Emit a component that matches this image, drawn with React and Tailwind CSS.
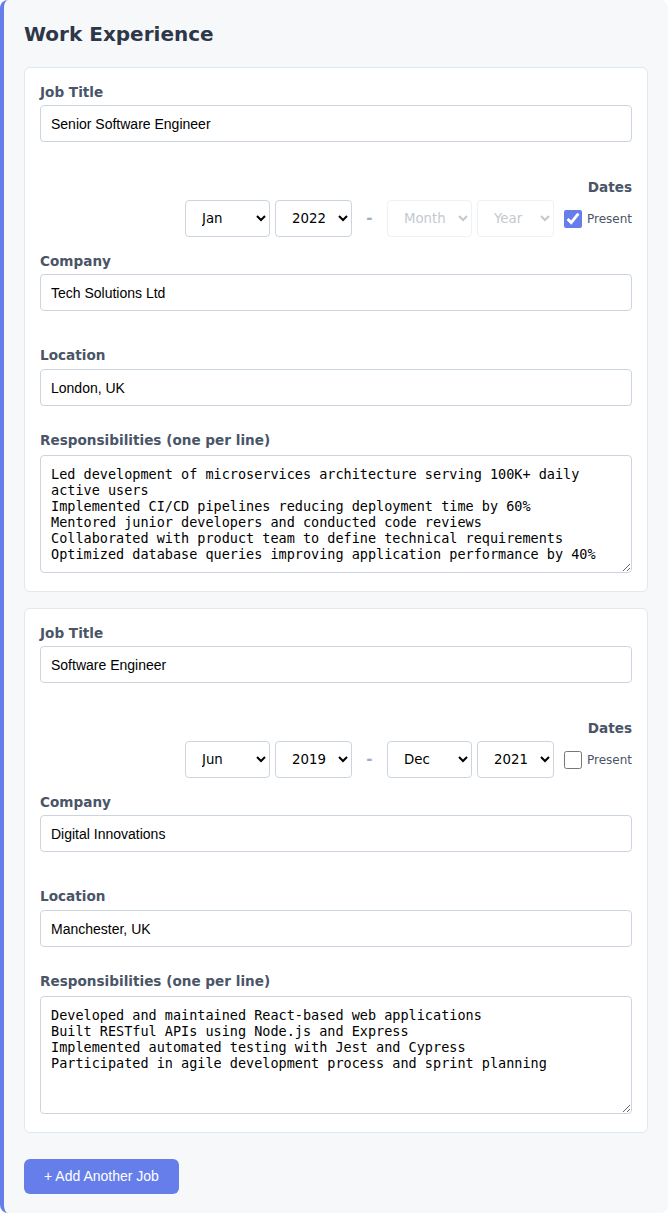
import { useState } from "react";

const MONTHS = ["Jan", "Feb", "Mar", "Apr", "May", "Jun", "Jul", "Aug", "Sep", "Oct", "Nov", "Dec"];
const YEARS = ["2024", "2023", "2022", "2021", "2020", "2019", "2018", "2017"];

const jobsData = [
  {
    id: 1,
    title: "Senior Software Engineer",
    startMonth: "Jan",
    startYear: "2022",
    endMonth: "",
    endYear: "",
    present: true,
    company: "Tech Solutions Ltd",
    location: "London, UK",
    responsibilities:
      "Led development of microservices architecture serving 100K+ daily active users\nImplemented CI/CD pipelines reducing deployment time by 60%\nMentored junior developers and conducted code reviews\nCollaborated with product team to define technical requirements\nOptimized database queries improving application performance by 40%",
  },
  {
    id: 2,
    title: "Software Engineer",
    startMonth: "Jun",
    startYear: "2019",
    endMonth: "Dec",
    endYear: "2021",
    present: false,
    company: "Digital Innovations",
    location: "Manchester, UK",
    responsibilities:
      "Developed and maintained React-based web applications\nBuilt RESTful APIs using Node.js and Express\nImplemented automated testing with Jest and Cypress\nParticipated in agile development process and sprint planning",
  },
];

const labelCls = "block h-5 leading-5 text-[13.6px] font-bold text-[#4a5568]";
const inputCls =
  "block w-full h-[37px] px-[10px] border border-[#cbd5e0] rounded-[4px] bg-white text-[14px] text-black [font-family:'Liberation_Sans',Arial,sans-serif]";

const DateSelect = ({ value, options, placeholder, width, disabled, onChange }) => (
  <select
    value={value}
    disabled={disabled}
    onChange={onChange}
    className={`${width} h-[37px] pl-[12px] pr-[6px] border rounded-[4px] bg-white text-[13.33px] ${
      disabled ? "border-[#edf2f7] text-[#c4c9d0]" : "border-[#cbd5e0] text-black"
    }`}
  >
    <option value="">{placeholder}</option>
    {options.map((o) => (
      <option key={o} value={o}>
        {o}
      </option>
    ))}
  </select>
);

const JobCard = ({ job, onChange }) => {
  const set = (key) => (e) => onChange(job.id, key, e.target.value);

  return (
    <div className="bg-white border border-[#e2e8f0] rounded-[6px] px-[15px] pt-[14px] pb-[18px] mb-[16px]">
      <label className={`${labelCls} mb-[3px]`}>Job Title</label>
      <input value={job.title} onChange={set("title")} className={`${inputCls} mb-[35px]`} />

      <div className="mb-[14px]">
        <label className={`${labelCls} text-right mb-[3px]`}>Dates</label>
        <div className="flex items-center justify-end gap-[5px]">
          <DateSelect value={job.startMonth} options={MONTHS} placeholder="Month" width="w-[85px]" onChange={set("startMonth")} />
          <DateSelect value={job.startYear} options={YEARS} placeholder="Year" width="w-[77px]" onChange={set("startYear")} />
          <span className="w-[25px] text-center text-[#a0aec0] text-[15px] font-bold">-</span>
          <DateSelect
            value={job.endMonth}
            options={MONTHS}
            placeholder="Month"
            width="w-[85px]"
            disabled={job.present}
            onChange={set("endMonth")}
          />
          <DateSelect
            value={job.endYear}
            options={YEARS}
            placeholder="Year"
            width="w-[77px]"
            disabled={job.present}
            onChange={set("endYear")}
          />
          <label className="flex items-center gap-[5px] ml-[5px] text-[12px] text-[#4a5568]">
            <input
              type="checkbox"
              checked={job.present}
              onChange={(e) => onChange(job.id, "present", e.target.checked)}
              className="w-[18px] h-[18px] m-0 accent-[#667eea]"
            />
            Present
          </label>
        </div>
      </div>

      <label className={`${labelCls} mb-[3px]`}>Company</label>
      <input value={job.company} onChange={set("company")} className={`${inputCls} mb-[34px]`} />

      <label className={`${labelCls} mb-[4px]`}>Location</label>
      <input value={job.location} onChange={set("location")} className={`${inputCls} mb-[24px]`} />

      <label className={`${labelCls} mb-[5px]`}>Responsibilities (one per line)</label>
      <textarea
        value={job.responsibilities}
        onChange={set("responsibilities")}
        className="block w-full h-[118px] px-[10px] pt-[10px] pb-[8px] border border-[#cbd5e0] rounded-[4px] bg-white text-[13.5px] leading-[16px] text-black [font-family:'DejaVu_Sans_Mono',monospace]"
      />
    </div>
  );
};

export default function App() {
  const [jobs, setJobs] = useState(jobsData);

  const updateJob = (id, key, value) => {
    setJobs(jobs.map((j) => (j.id === id ? { ...j, [key]: value } : j)));
  };

  const addJob = () => {
    setJobs([
      ...jobs,
      {
        id: Date.now(),
        title: "",
        startMonth: "",
        startYear: "",
        endMonth: "",
        endYear: "",
        present: false,
        company: "",
        location: "",
        responsibilities: "",
      },
    ]);
  };

  return (
    <div className="bg-white min-h-[1215px] [font-family:'DejaVu_Sans',Verdana,sans-serif]">
      <div className="bg-[#f7f8fa] border-l-4 border-[#667eea] rounded-lg pl-[20px] pr-[20px] pt-[20px] pb-[19px]">
        <h2 className="text-[20px] leading-[28px] font-bold text-[#2d3748] mb-[19px]">Work Experience</h2>
        {jobs.map((job) => (
          <JobCard key={job.id} job={job} onChange={updateJob} />
        ))}
        <button
          onClick={addJob}
          className="mt-[10px] h-[35px] w-[155px] bg-[#667eea] text-white rounded-[6px] text-[14px] [font-family:'Liberation_Sans',Arial,sans-serif]"
        >
          + Add Another Job
        </button>
      </div>
    </div>
  );
}
